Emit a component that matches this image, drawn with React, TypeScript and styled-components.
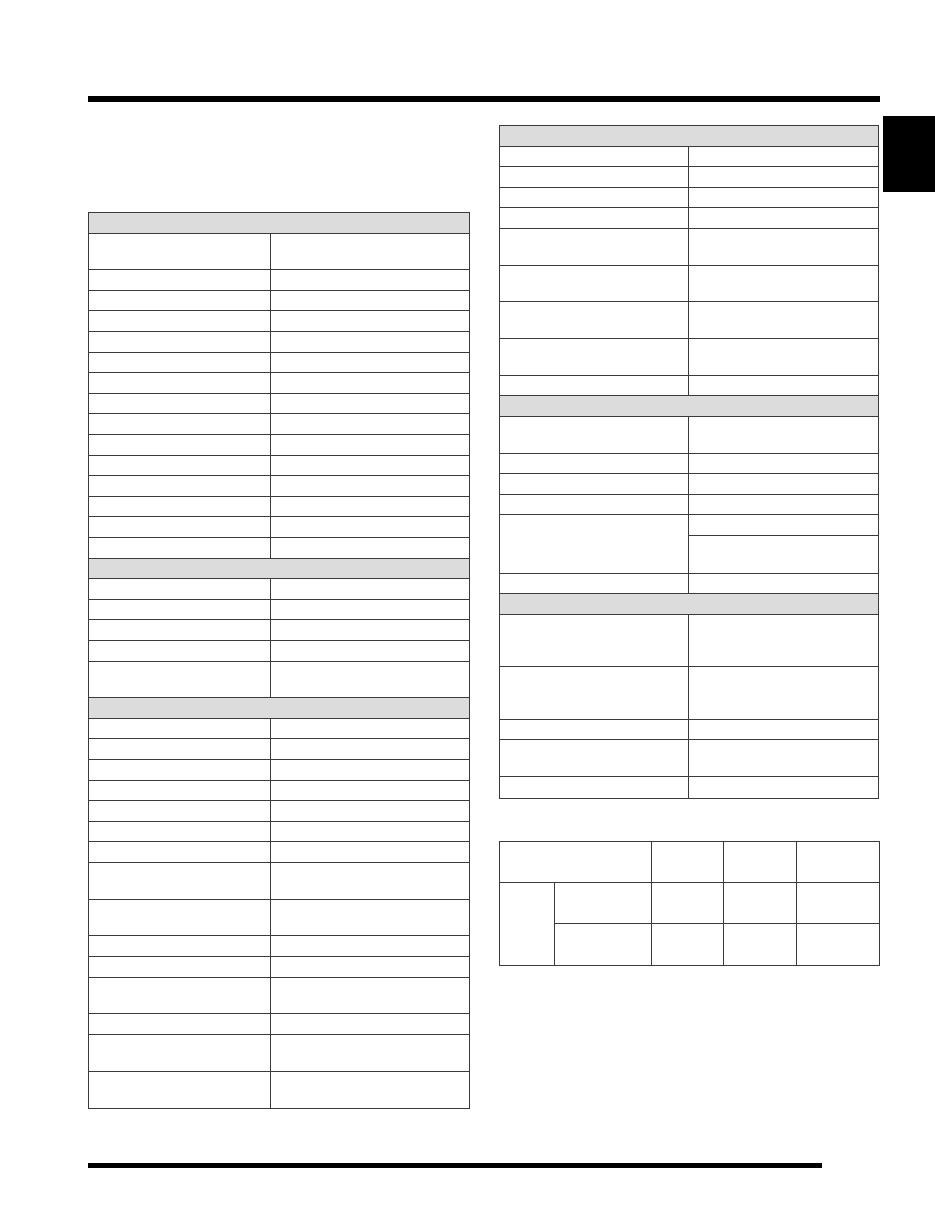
import React from "react";
import styled, { createGlobalStyle } from "styled-components";

const Global = createGlobalStyle`
  html, body { margin: 0; padding: 0; background: #ffffff; }
  body { font-family: "Liberation Sans", Arial, sans-serif; }
`;

const LINE = "#3a3a3a";
const SHADE = "#dcdcdc";

const Page = styled.div`
  position: relative;
  width: 935px;
  height: 1210px;
  padding-top: 96px;
  box-sizing: border-box;
  overflow: hidden;
`;

const Rule = styled.div<{ $w: number; $h: number }>`
  margin-left: 88px;
  width: ${(p) => p.$w}px;
  height: ${(p) => p.$h}px;
  background: #000;
`;

const BottomRule = styled(Rule)`
  margin-top: 54px;
`;

const EdgeTab = styled.div`
  position: absolute;
  top: 116px;
  left: 883px;
  width: 52px;
  height: 76px;
  background: #000;
`;

const Columns = styled.div`
  display: flex;
  align-items: flex-start;
  gap: 29px;
  margin: 23px 0 0 88px;
`;

const LeftCol = styled.div`
  width: 382px;
  padding-top: 87px;
`;

const RightCol = styled.div`
  width: 381px;
  display: flex;
  flex-direction: column;
  gap: 42px;
`;

const Table = styled.div<{ $w: number; $split: number }>`
  --split: ${(p) => p.$split}px;
  width: ${(p) => p.$w}px;
  border: 1px solid ${LINE};
  box-sizing: border-box;
`;

const Row = styled.div<{ $h: number }>`
  display: grid;
  grid-template-columns: var(--split) 1fr;
  height: ${(p) => p.$h}px;
  box-sizing: border-box;
  border-bottom: 1px solid ${LINE};
  &:last-child { border-bottom: none; }
`;

const HeadRow = styled.div<{ $h: number }>`
  height: ${(p) => p.$h}px;
  box-sizing: border-box;
  background: ${SHADE};
  border-bottom: 1px solid ${LINE};
`;

const Cell = styled.div<{ $divider?: boolean }>`
  box-sizing: border-box;
  border-right: ${(p) => (p.$divider ? `1px solid ${LINE}` : "none")};
`;

const SplitRow = styled.div`
  display: grid;
  grid-template-columns: var(--split) 1fr;
  box-sizing: border-box;
  border-bottom: 1px solid ${LINE};
`;

const SubStack = styled.div`
  display: flex;
  flex-direction: column;
`;

const SubCell = styled.div<{ $h: number }>`
  height: ${(p) => p.$h}px;
  box-sizing: border-box;
  border-bottom: 1px solid ${LINE};
  &:last-child { border-bottom: none; }
`;

const Matrix = styled.div`
  display: grid;
  width: 381px;
  grid-template-columns: 55px 97px 72px 73px 1fr;
  grid-template-rows: repeat(3, 41.3px);
  border-top: 1px solid ${LINE};
  border-left: 1px solid ${LINE};
  box-sizing: border-box;
`;

const MCell = styled.div<{ $col: string; $row: string }>`
  grid-column: ${(p) => p.$col};
  grid-row: ${(p) => p.$row};
  border-right: 1px solid ${LINE};
  border-bottom: 1px solid ${LINE};
  box-sizing: border-box;
`;

type Spec = "h" | 1 | 2 | 3 | "split";

const H: Record<string, number> = { h: 20.6, "1": 20.6, "2": 36.7, "3": 52.5 };

const rep = (n: number, v: Spec): Spec[] => Array.from({ length: n }, () => v);

const leftSpec: Spec[] = [
  "h", 2, ...rep(14, 1),
  "h", ...rep(4, 1), 2,
  "h", ...rep(7, 1), 2, 2, 1, 1, 2, 1, 2, 2,
];

const rightSpec: Spec[] = [
  "h", 1, 1, 1, 1, 2, 2, 2, 2, 1,
  "h", 2, 1, 1, 1, "split", 1,
  "h", 3, 3, 1, 2, 1,
];

function SpecTable({ spec, width, split }: { spec: Spec[]; width: number; split: number }) {
  return (
    <Table $w={width} $split={split}>
      {spec.map((s, i) => {
        if (s === "h") return <HeadRow key={i} $h={H.h} />;
        if (s === "split")
          return (
            <SplitRow key={i}>
              <Cell $divider />
              <SubStack>
                <SubCell $h={H["1"]} />
                <SubCell $h={H["2"]} />
              </SubStack>
            </SplitRow>
          );
        return (
          <Row key={i} $h={H[String(s)]}>
            <Cell $divider />
            <Cell />
          </Row>
        );
      })}
    </Table>
  );
}

const matrixCells: { col: string; row: string }[] = [
  { col: "1 / 3", row: "1" },
  { col: "3", row: "1" },
  { col: "4", row: "1" },
  { col: "5", row: "1" },
  { col: "1", row: "2 / 4" },
  { col: "2", row: "2" },
  { col: "3", row: "2" },
  { col: "4", row: "2" },
  { col: "5", row: "2" },
  { col: "2", row: "3" },
  { col: "3", row: "3" },
  { col: "4", row: "3" },
  { col: "5", row: "3" },
];

export default function App() {
  return (
    <>
      <Global />
      <Page>
        <Rule $w={792} $h={6} />
        <EdgeTab />
        <Columns>
          <LeftCol>
            <SpecTable spec={leftSpec} width={382} split={182} />
          </LeftCol>
          <RightCol>
            <SpecTable spec={rightSpec} width={380} split={189} />
            <Matrix>
              {matrixCells.map((c, i) => (
                <MCell key={i} $col={c.col} $row={c.row} />
              ))}
            </Matrix>
          </RightCol>
        </Columns>
        <BottomRule $w={734} $h={5} />
      </Page>
    </>
  );
}
